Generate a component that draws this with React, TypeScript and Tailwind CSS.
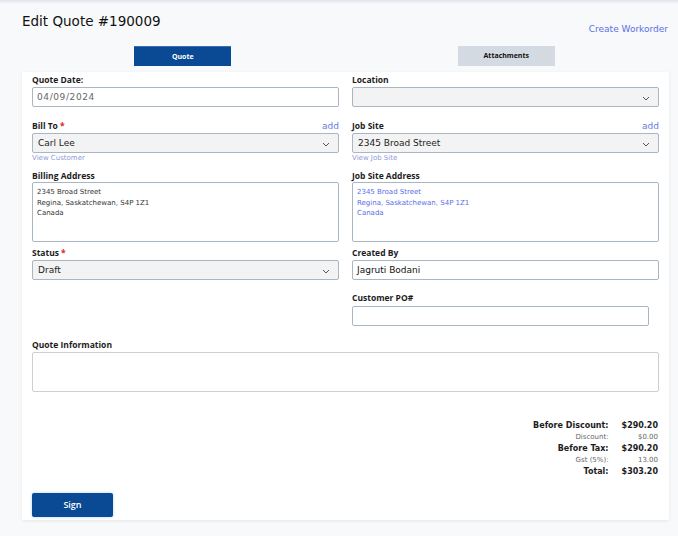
import React from "react";

const label = "block text-[8.5px] leading-[12px] font-bold text-[#1c1c1c] [font-family:'Open_Sans',sans-serif]";
const value = "[font-family:'DejaVu_Sans',sans-serif]";

const Chevron = () => (
  <svg width="8" height="5" viewBox="0 0 8 5" className="absolute right-[8px] top-[8px]">
    <path d="M1 1 L4 4 L7 1" fill="none" stroke="#555" strokeWidth="1" />
  </svg>
);

const Req = () => <span className="text-[#e0242b] ml-[2px]">*</span>;

const Select = ({ text }: { text?: string }) => (
  <div
    className={`relative h-[20px] rounded-[2px] border border-[#a9b6c3] bg-[#f3f3f3] pl-[5px] text-[9px] leading-[18px] text-[#222] ${value}`}
  >
    {text}
    <Chevron />
  </div>
);

const Input = ({ text, className = "" }: { text?: string; className?: string }) => (
  <div
    className={`h-[20px] rounded-[2px] border border-[#a9b6c3] bg-white pl-[4px] text-[9px] leading-[18px] ${value} ${className}`}
  >
    {text}
  </div>
);

const Address = ({ blue }: { blue?: boolean }) => (
  <div
    className={`h-[60px] rounded-[2px] border border-[#a9b6c3] bg-white px-[4px] pt-[4px] text-[7px] leading-[10.5px] ${value} ${
      blue ? "text-[#5a6ee8]" : "text-[#333]"
    }`}
  >
    <div>2345 Broad Street</div>
    <div>Regina, Saskatchewan, S4P 1Z1</div>
    <div>Canada</div>
  </div>
);

const LabelRow = ({ children, add }: { children: React.ReactNode; add?: boolean }) => (
  <div className="flex items-end justify-between mb-[1px]">
    <span className={label}>{children}</span>
    {add && <span className={`text-[9px] leading-[12px] text-[#6b79e0] ${value}`}>add</span>}
  </div>
);

export default function App() {
  return (
    <div className="min-h-[536px] w-full bg-[#f8f9fb] text-[#1c1c1c]">
      <div className="h-[4px] bg-gradient-to-b from-[#dfe3e8] to-[#f8f9fb]" />
      <div className="flex h-[26px] items-start justify-between px-[22px] pt-[8px]">
        <h1 className={`text-[13.5px] leading-[18px] font-medium text-[#111] ${value}`}>Edit Quote #190009</h1>
        <span className={`mt-[11px] mr-[-12px] text-[9px] leading-[12px] text-[#5b6fe4] ${value}`}>Create Workorder</span>
      </div>
      <div className="mx-[22px] mt-[16px] grid w-[647px] grid-cols-2">
        <div className="flex justify-center">
          <div className="ml-[-2px] h-[20px] w-[97px] border-t border-[#3a6fb0] bg-[#0a4a94] text-center text-[7px] font-bold leading-[19px] text-white [font-family:'Open_Sans',sans-serif]">
            Quote
          </div>
        </div>
        <div className="flex justify-center">
          <div className="ml-[-2px] h-[20px] w-[97px] bg-[#d4dae2] text-center text-[7px] font-bold leading-[20px] text-[#111] [font-family:'Open_Sans',sans-serif]">
            Attachments
          </div>
        </div>
      </div>
      <div className="mx-[22px] mt-[6px] w-[647px] bg-white px-[10px] pt-[2px] pb-[3px] shadow-[0_1px_3px_rgba(0,0,0,0.08)]">
        <div className="grid grid-cols-2 gap-x-[13px]">
          <div>
            <LabelRow>Quote Date:</LabelRow>
            <Input text="04/09/2024" className="tracking-[0.6px] text-[#666]" />
          </div>
          <div>
            <LabelRow>Location</LabelRow>
            <Select />
          </div>

          <div className="mt-[13px]">
            <LabelRow add>
              Bill To<Req />
            </LabelRow>
            <Select text="Carl Lee" />
            <div className={`mt-[1px] text-[7px] leading-[8px] text-[#8f98d8] ${value}`}>View Customer</div>
          </div>
          <div className="mt-[13px]">
            <LabelRow add>Job Site</LabelRow>
            <Select text="2345 Broad Street" />
            <div className={`mt-[1px] text-[7px] leading-[8px] text-[#8f98d8] ${value}`}>View Job Site</div>
          </div>

          <div className="mt-[8px]">
            <span className={label}>Billing Address</span>
            <Address />
          </div>
          <div className="mt-[8px]">
            <span className={label}>Job Site Address</span>
            <Address blue />
          </div>

          <div className="mt-[5px]">
            <LabelRow>
              Status<Req />
            </LabelRow>
            <Select text="Draft" />
          </div>
          <div className="mt-[5px]">
            <LabelRow>Created By</LabelRow>
            <Input text="Jagruti Bodani" className="text-[#111]" />
          </div>

          <div />
          <div className="mt-[12px]">
            <div className="mb-[2px]">
              <span className={label}>Customer PO#</span>
            </div>
            <Input className="w-[297px]" />
          </div>
        </div>

        <div className="mt-[13px]">
          <LabelRow>Quote Information</LabelRow>
          <div className="h-[40px] rounded-[2px] border border-[#cfcfcf] bg-white" />
        </div>

        <div className={`mt-[27px] flex justify-end pr-[1px] ${value}`}>
          <div className="grid grid-cols-[auto_auto] gap-x-[13px] text-right">
            <span className="text-[8px] font-bold leading-[13px]">Before Discount:</span>
            <span className="text-[8px] font-bold leading-[13px]">$290.20</span>
            <span className="text-[7px] leading-[10px] text-[#666]">Discount:</span>
            <span className="text-[7px] leading-[10px] text-[#666]">$0.00</span>
            <span className="text-[8px] font-bold leading-[13px]">Before Tax:</span>
            <span className="text-[8px] font-bold leading-[13px]">$290.20</span>
            <span className="text-[7px] leading-[10px] text-[#666]">Gst (5%):</span>
            <span className="text-[7px] leading-[10px] text-[#666]">13.00</span>
            <span className="text-[8px] font-bold leading-[13px]">Total:</span>
            <span className="text-[8px] font-bold leading-[13px]">$303.20</span>
          </div>
        </div>

        <div className="mt-[12px]">
          <button className="h-[24px] w-[81px] rounded-[2px] bg-[#0a4a94] text-[9px] font-semibold text-white shadow-[0_0_3px_rgba(80,170,230,0.5)] [font-family:'Open_Sans',sans-serif]">
            Sign
          </button>
        </div>
      </div>
    </div>
  );
}
